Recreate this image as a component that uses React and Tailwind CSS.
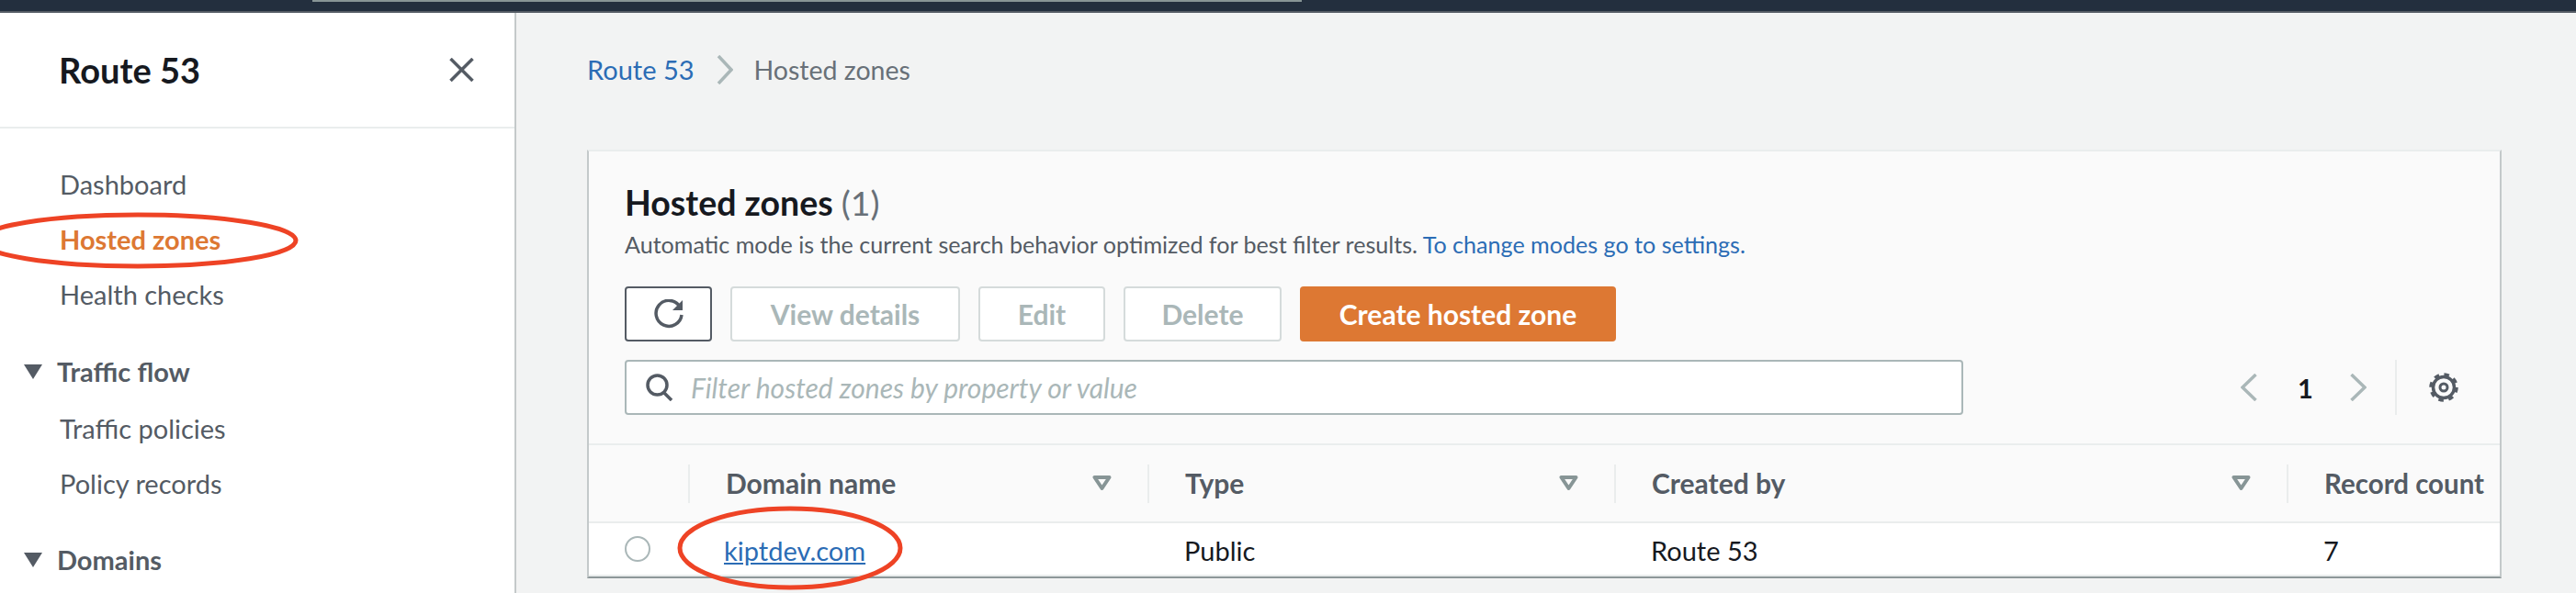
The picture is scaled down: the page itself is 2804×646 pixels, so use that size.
const font = "font-['Lato','Noto_Sans',sans-serif]";

function Caret() {
    return (
        <svg width="20" height="16" viewBox="0 0 20 16" className="shrink-0">
            <polygon points="0,0 20,0 10,16" fill="#545b64" />
        </svg>
    );
}

function FilterIcon() {
    return (
        <svg width="21" height="17" viewBox="0 0 21 17" className="shrink-0">
            <polygon points="2.5,2 18.5,2 10.5,14" fill="none" stroke="#879596" strokeWidth="4" strokeLinejoin="round" />
        </svg>
    );
}

function NavItem({ children, active }) {
    return (
        <li className={`flex h-[60px] items-center pl-[65px] ${active ? 'font-bold text-[#dd7833]' : 'text-[#545b64]'}`}>
            {children}
        </li>
    );
}

function NavGroup({ children }) {
    return (
        <div className="flex h-[60px] items-center gap-[16px] pl-[26px] font-bold text-[#545b64]">
            <Caret />
            {children}
        </div>
    );
}

function DisabledButton({ children, width }) {
    return (
        <button className={`h-[60px] ${width} rounded-[4px] border-2 border-[#d5dbdb] bg-white text-[30px] font-bold text-[#aab7b8]`}>
            {children}
        </button>
    );
}

function HeaderCell({ children, filter, pr }) {
    return (
        <div className={`flex h-[42px] items-center justify-between border-l-2 border-[#eaeded] pl-[39px] ${pr} text-[30px] font-bold text-[#545b64]`}>
            <span>{children}</span>
            {filter && <FilterIcon />}
        </div>
    );
}

export default function App() {
    return (
        <div className={`relative flex h-[646px] w-[2804px] flex-col overflow-hidden bg-[#f2f3f3] text-[29px] ${font}`}>
            {/* top console bar */}
            <div className="h-[14px] shrink-0 border-b-2 border-[#545b64] bg-[#232f3e]">
                <div className="ml-[340px] h-[2px] w-[1077px] bg-[#879596]" />
            </div>

            <div className="flex min-h-0 flex-1">
                <aside className="w-[562px] shrink-0 border-r-2 border-[#c4c9ca] bg-white">
                    <div className="flex h-[126px] items-center justify-between border-b-2 border-[#eaeded] pl-[64px] pr-[44px]">
                        <h1 className="text-[38px] font-bold text-[#16191f]">Route 53</h1>
                        <svg width="27" height="26" viewBox="0 0 27 26" fill="none" stroke="#545b64" strokeWidth="3.5">
                            <path d="M1.5 1 25.5 25M25.5 1 1.5 25" />
                        </svg>
                    </div>
                    <nav className="pt-[31px]">
                        <ul>
                            <NavItem>Dashboard</NavItem>
                            <NavItem active>Hosted zones</NavItem>
                            <NavItem>Health checks</NavItem>
                        </ul>
                        <div className="mt-[24px]">
                            <NavGroup>Traffic flow</NavGroup>
                        </div>
                        <ul className="mt-[2px]">
                            <NavItem>Traffic policies</NavItem>
                            <NavItem>Policy records</NavItem>
                        </ul>
                        <div className="mt-[23px]">
                            <NavGroup>Domains</NavGroup>
                        </div>
                    </nav>
                </aside>

                <main className="min-w-0 flex-1 pl-[77px] pt-[39px]">
                    <div className="flex h-[46px] items-center">
                        <a className="text-[#2b6cb5]">Route 53</a>
                        <svg width="18" height="32" viewBox="0 0 18 32" fill="none" stroke="#aab7b8" strokeWidth="3.5" className="ml-[24px] mr-[23px]">
                            <path d="M2 1 16 16 2 31" />
                        </svg>
                        <span className="text-[28.5px] text-[#687078]">Hosted zones</span>
                    </div>

                    <section className="mt-[64px] h-[467px] w-[2084px] border-x-2 border-b-2 border-t-2 border-x-[#c4c9ca] border-b-[#8d9799] border-t-[#eaeded] bg-[#fafafa]">
                        <div className="px-[39px] pt-[34px]">
                            <h2 className="h-[44px] text-[37.5px] font-bold leading-[44px] text-[#16191f]">
                                Hosted zones <span className="font-normal text-[#687078]">(1)</span>
                            </h2>
                            <p className="mt-[7px] text-[25.1px] leading-[32px] text-[#545b64]">
                                Automatic mode is the current search behavior optimized for best filter results.{' '}
                                <a className="text-[#2b6cb5]">To change modes go to settings.</a>
                            </p>

                            <div className="mt-[30px] flex gap-[20px]">
                                <button className="flex h-[60px] w-[95px] items-center justify-center rounded-[4px] border-2 border-[#545b64] bg-white">
                                    <svg width="34" height="32" viewBox="0 0 34 32" fill="none">
                                        <path d="M29 8A14 14 0 1 0 31 17" stroke="#545b64" strokeWidth="3.5" />
                                        <polygon points="32,1 32,12 21,12" fill="#545b64" />
                                    </svg>
                                </button>
                                <DisabledButton width="w-[250px]">View details</DisabledButton>
                                <DisabledButton width="w-[138px]">Edit</DisabledButton>
                                <DisabledButton width="w-[172px]">Delete</DisabledButton>
                                <button className="h-[60px] w-[344px] rounded-[4px] bg-[#dd7833] text-[30px] font-bold text-white">Create hosted zone</button>
                            </div>

                            <div className="mt-[20px] flex h-[60px] items-center">
                                <div className="flex h-[60px] w-[1457px] items-center gap-[19px] rounded-[4px] border-2 border-[#aab7b8] bg-white pl-[21px]">
                                    <svg width="30" height="30" viewBox="0 0 30 30" fill="none" stroke="#545b64" strokeWidth="3.5">
                                        <circle cx="12.5" cy="12.5" r="10.5" />
                                        <path d="M19 20 28 29" />
                                    </svg>
                                    <span className="text-[30px] italic text-[#aab7b8]">Filter hosted zones by property or value</span>
                                </div>

                                <div className="ml-auto flex h-[60px] items-center pr-[6px]">
                                    <svg width="18" height="30" viewBox="0 0 18 30" fill="none" stroke="#aab7b8" strokeWidth="3.5">
                                        <path d="M16.5 1 2 15 16.5 29" />
                                    </svg>
                                    <span className="ml-[44px] mr-[44px] w-[13px] font-bold leading-none text-[#16191f]">1</span>
                                    <svg width="18" height="30" viewBox="0 0 18 30" fill="none" stroke="#aab7b8" strokeWidth="3.5">
                                        <path d="M1.5 1 16 15 1.5 29" />
                                    </svg>
                                    <div className="ml-[31px] h-[60px] border-l-2 border-[#eaeded]" />
                                    <svg width="32" height="32" viewBox="0 0 32 32" fill="none" stroke="#545b64" className="ml-[35px]">
                                        <circle cx="16" cy="16" r="11.5" strokeWidth="3.5" />
                                        <circle cx="16" cy="16" r="14" strokeWidth="3.5" strokeDasharray="5.5 5.5" />
                                        <circle cx="16" cy="16" r="4" strokeWidth="3" />
                                    </svg>
                                </div>
                            </div>
                        </div>

                        <div className="mt-[31px] border-t-2 border-[#eaeded]">
                            <div className="grid h-[85px] grid-cols-[108px_500px_508px_732px_1fr] items-center border-b-2 border-[#eaeded]">
                                <div />
                                <HeaderCell filter pr="pr-[39px]">Domain name</HeaderCell>
                                <HeaderCell filter pr="pr-[39px]">Type</HeaderCell>
                                <HeaderCell filter pr="pr-[39px]">Created by</HeaderCell>
                                <HeaderCell pr="pr-0"><span className="text-[29.5px]">Record count</span></HeaderCell>
                            </div>
                            <div className="grid h-[58px] grid-cols-[108px_500px_508px_732px_1fr] items-center border-b-2 border-[#eaeded] bg-white text-[#16191f]">
                                <div className="pl-[39px]">
                                    <div className="h-[28px] w-[28px] rounded-full border-2 border-[#aab7b8]" />
                                </div>
                                <a className="pl-[39px] pt-[3px] text-[#2b6cb5] underline">kiptdev.com</a>
                                <span className="pl-[40px] pt-[3px]">Public</span>
                                <span className="pl-[40px] pt-[3px]">Route 53</span>
                                <span className="pl-[40px] pt-[3px]">7</span>
                            </div>
                        </div>
                    </section>
                </main>
            </div>

            {/* red annotation rings drawn over the screenshot */}
            <svg width="2804" height="646" className="pointer-events-none absolute left-0 top-0" fill="none" stroke="#ee4325" strokeWidth="5">
                <ellipse cx="150" cy="262" rx="172" ry="28" />
                <ellipse cx="860" cy="597" rx="120" ry="43" />
            </svg>
        </div>
    );
}
